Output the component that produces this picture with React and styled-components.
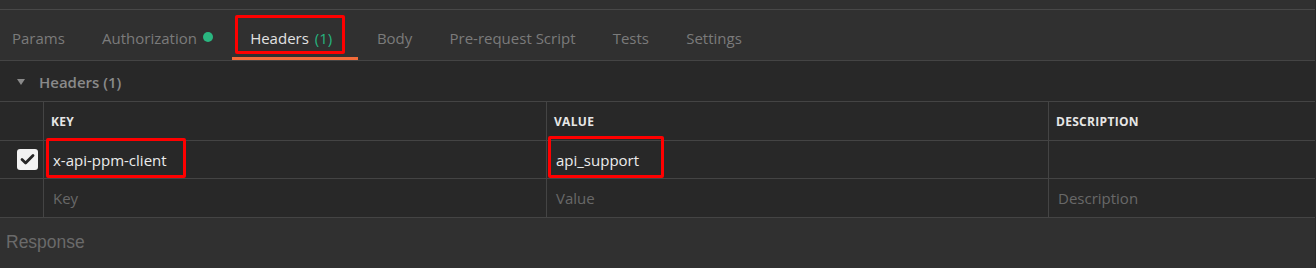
import styled, { createGlobalStyle } from 'styled-components';

const GlobalStyle = createGlobalStyle`
  html, body {
    margin: 0;
    padding: 0;
    background: #303030;
  }
  * {
    box-sizing: border-box;
  }
`;

const tabs = [
  { name: 'Params' },
  { name: 'Authorization', dot: true },
  { name: 'Headers', count: 1, active: true, marked: true },
  { name: 'Body' },
  { name: 'Pre-request Script' },
  { name: 'Tests' },
  { name: 'Settings' },
];

const columns = ['KEY', 'VALUE', 'DESCRIPTION'];

function App() {
  return (
    <Page>
      <GlobalStyle />
      <TopStrip />

      <TabBar>
        {tabs.map((t) => (
          <Tab key={t.name} $active={t.active}>
            {t.name}
            {t.count !== undefined && <Count>({t.count})</Count>}
            {t.dot && <Dot />}
            {t.marked && <Mark $left={3} $top={5} $width={110} $height={39} />}
          </Tab>
        ))}
      </TabBar>

      <SectionHead>
        <Caret />
        <SectionTitle>Headers (1)</SectionTitle>
      </SectionHead>

      <Table>
        <HeadRow>
          <CheckCell />
          {columns.map((c) => (
            <HeadCell key={c}>{c}</HeadCell>
          ))}
        </HeadRow>

        <Row>
          <CheckCell>
            <CheckBox>
              <svg width="15" height="13" viewBox="0 0 15 13">
                <path d="M2 6.6 L5.6 10 L13 2.6" fill="none" stroke="#262626" strokeWidth="2.8" strokeLinecap="round" strokeLinejoin="round" />
              </svg>
            </CheckBox>
          </CheckCell>
          <Cell>
            x-api-ppm-client
            <Mark $left={2} $top={-3} $width={140} $height={40} />
          </Cell>
          <Cell>
            api_support
            <Mark $left={1} $top={-5} $width={116} $height={42} />
          </Cell>
          <Cell />
        </Row>

        <Row $tall>
          <CheckCell />
          <Cell $placeholder>Key</Cell>
          <Cell $placeholder>Value</Cell>
          <Cell $placeholder>Description</Cell>
        </Row>
      </Table>

      <ResponseBar>Response</ResponseBar>
    </Page>
  );
}

export default App;

const Page = styled.div`
  width: 1316px;
  height: 268px;
  overflow: hidden;
  background: #303030;
  font-family: "Open Sans", "Noto Sans", sans-serif;
  border-right: 1px solid #2a2a2a;
`;

const TopStrip = styled.div`
  height: 10px;
  border-bottom: 1px solid #484848;
`;

const TabBar = styled.div`
  display: flex;
  height: 51px;
  border-bottom: 1px solid #444444;
`;

const Tab = styled.div`
  position: relative;
  display: flex;
  align-items: center;
  height: 50px;
  padding: 9px 18.6px 0 18.6px;
  font-size: 15px;
  color: ${(p) => (p.$active ? '#e2e2e2' : '#7b7b7b')};
  border-bottom: 3px solid ${(p) => (p.$active ? '#f26b3a' : 'transparent')};
  ${(p) => p.$active && 'padding-right: 26px;'}

  &:first-child {
    padding-left: 12px;
  }
`;

const Count = styled.span`
  margin-left: 6px;
  color: #26b47f;
`;

const Dot = styled.span`
  width: 10px;
  height: 10px;
  margin-left: 6px;
  margin-top: -2px;
  border-radius: 50%;
  background: #2ab680;
`;

const Mark = styled.span`
  position: absolute;
  left: ${(p) => p.$left}px;
  top: ${(p) => p.$top}px;
  width: ${(p) => p.$width}px;
  height: ${(p) => p.$height}px;
  border: 3px solid #ff0000;
  border-radius: 2px;
  pointer-events: none;
`;

const SectionHead = styled.div`
  display: flex;
  align-items: center;
  height: 41px;
  padding: 2px 0 0 17px;
  background: #282828;
  border-bottom: 1px solid #444444;
`;

const Caret = styled.span`
  width: 0;
  height: 0;
  border-left: 4.5px solid transparent;
  border-right: 4.5px solid transparent;
  border-top: 6px solid #8a8a8a;
  margin-right: 14px;
`;

const SectionTitle = styled.span`
  font-size: 15px;
  font-weight: 600;
  color: #8a8a8a;
`;

const Table = styled.div`
  background: #282828;
`;

const HeadRow = styled.div`
  display: grid;
  grid-template-columns: 43px 503px 502px 1fr;
  height: 39px;
  border-bottom: 1px solid #444444;
`;

const Row = styled(HeadRow)`
  height: ${(p) => (p.$tall ? 39 : 38)}px;
`;

const CheckCell = styled.div`
  display: flex;
  align-items: center;
  justify-content: center;
  padding-left: 12px;
`;

const HeadCell = styled.div`
  display: flex;
  align-items: center;
  padding: 0 7px;
  border-left: 1px solid #444444;
  font-size: 12px;
  font-weight: 700;
  letter-spacing: 0.3px;
  color: #e6e6e6;
`;

const Cell = styled.div`
  position: relative;
  display: flex;
  align-items: center;
  padding: 0 9px;
  border-left: 1px solid #444444;
  font-size: 15px;
  color: ${(p) => (p.$placeholder ? '#686868' : '#ececec')};
`;

const CheckBox = styled.span`
  display: flex;
  align-items: center;
  justify-content: center;
  width: 21px;
  height: 21px;
  border-radius: 3px;
  background: #f2f2f2;
`;

const ResponseBar = styled.div`
  height: 50px;
  padding: 14px 0 0 6px;
  background: #303030;
  font-family: "Liberation Sans", Arial, sans-serif;
  font-size: 17.5px;
  color: #6a6a6a;
`;
